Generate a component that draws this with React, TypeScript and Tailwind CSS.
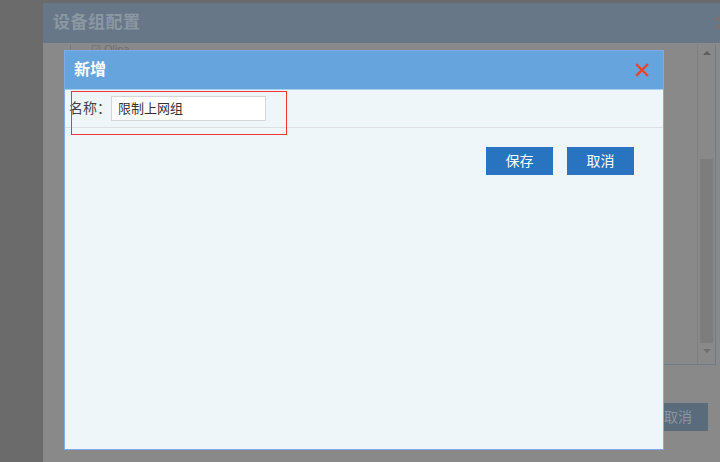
export default function App() {
  return (
    <div
      className="relative w-[720px] h-[462px] overflow-hidden bg-[#6b6b6b]"
      style={{ fontFamily: '"Liberation Sans", "Noto Sans CJK SC", sans-serif' }}
    >
      {/* background dialog (dimmed) */}
      <div className="absolute left-[43px] top-[3px] w-[700px] h-[470px] flex flex-col bg-[#898989]">
        <div className="h-[40px] shrink-0 bg-[#677787] flex items-center pl-[10px] relative">
          <span className="text-[17px] font-bold text-[#8b97a3] tracking-[0.5px]">设备组配置</span>
          <svg className="absolute left-[673px] top-[14px]" width="12" height="12" viewBox="0 0 12 12">
            <path d="M1 1 L11 11 M11 1 L1 11" stroke="#8e6a66" strokeWidth="2" />
          </svg>
        </div>
        <div className="relative flex-1">
          <div className="absolute left-[27px] top-[2px] w-[646px] h-[320px] border border-[#6f7c88] border-t-0 flex">
            <div className="flex-1 pl-[20px] text-[11px] text-[#707070] leading-[8px]">☑ Olina</div>
            <div className="w-[18px] border-l border-[#7f7f7f] flex flex-col items-center pt-[6px] pb-[4px]">
              <div className="w-0 h-0 border-l-[4px] border-r-[4px] border-b-[4px] border-l-transparent border-r-transparent border-b-[#5f5f5f]" />
              <div className="mt-[104px] w-[13px] h-[184px] bg-[#7d7d7d]" />
              <div className="mt-[6px] w-0 h-0 border-l-[4px] border-r-[4px] border-t-[4px] border-l-transparent border-r-transparent border-t-[#6f6f6f]" />
            </div>
          </div>
          <div className="absolute left-[605px] top-[360px] w-[60px] h-[28px] bg-[#5a6b7b] flex items-center justify-center text-[14px] text-[#8a96a2]">
            取消
          </div>
        </div>
      </div>

      {/* foreground modal */}
      <div className="absolute left-[64px] top-[50px] w-[600px] h-[400px] border border-[#7fa9e8] bg-[#eef6fa] flex flex-col">
        <div className="h-[39px] shrink-0 bg-[#65a4dc] border-b border-[#a9d0ee] flex items-center justify-between pl-[9px] pr-[14px]">
          <span className="text-[16px] font-bold text-white">新增</span>
          <svg width="14" height="14" viewBox="0 0 14 14">
            <path d="M2 2 L12 12 M12 2 L2 12" stroke="#e8452e" strokeWidth="2.4" strokeLinecap="square" />
          </svg>
        </div>
        <div className="h-[38px] shrink-0 border-b border-[#dcdee0] flex items-center pl-[4px]">
          <span className="text-[14px] text-[#444]">名称：</span>
          <div className="w-[155px] h-[25px] bg-white border border-[#d3d6d8] flex items-center pl-[6px] text-[13px] text-[#333]">
            限制上网组
          </div>
        </div>
        <div className="flex justify-end gap-[14px] pr-[29px] pt-[19px]">
          <div className="w-[67px] h-[28px] bg-[#2874c0] flex items-center justify-center text-[14px] text-white">保存</div>
          <div className="w-[67px] h-[28px] bg-[#2874c0] flex items-center justify-center text-[14px] text-white">取消</div>
        </div>
        {/* red annotation outline */}
        <div className="absolute left-[6px] top-[40px] w-[216px] h-[44px] border border-[#ef3535]" />
      </div>
    </div>
  )
}
